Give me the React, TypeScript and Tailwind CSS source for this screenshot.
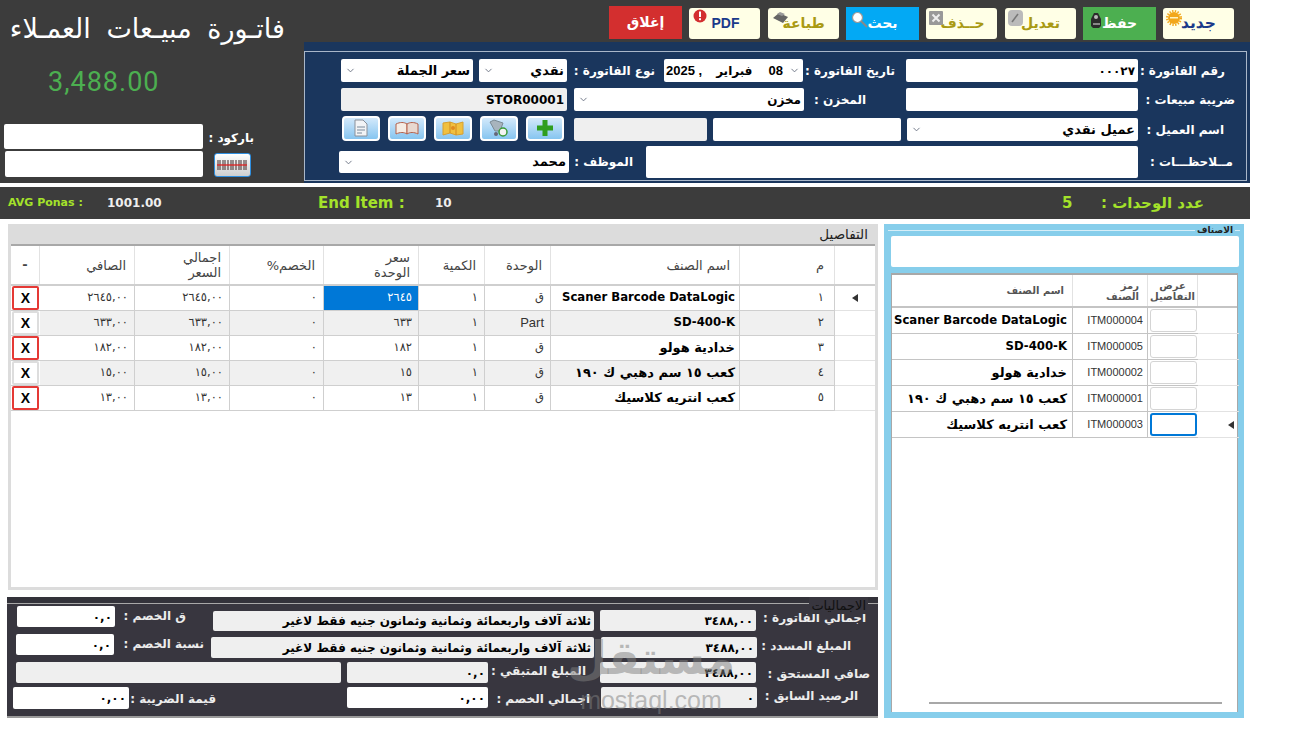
import React from 'react';
import { ChevronDown } from 'lucide-react';

const details = [
  { no: '١', name: 'Scaner Barcode DataLogic', latin: true, unit: 'ق', qty: '١', price: '٢٦٤٥', total: '٢٦٤٥,٠٠' },
  { no: '٢', name: 'SD-400-K', latin: true, unit: 'Part', qty: '١', price: '٦٣٣', total: '٦٣٣,٠٠' },
  { no: '٣', name: 'خدادية هولو', latin: false, unit: 'ق', qty: '١', price: '١٨٢', total: '١٨٢,٠٠' },
  { no: '٤', name: 'كعب ١٥ سم دهبي ك ١٩٠', latin: false, unit: 'ق', qty: '١', price: '١٥', total: '١٥,٠٠' },
  { no: '٥', name: 'كعب انتريه كلاسيك', latin: false, unit: 'ق', qty: '١', price: '١٣', total: '١٣,٠٠' },
];

const items = [
  { code: 'ITM000004', name: 'Scaner Barcode DataLogic', latin: true },
  { code: 'ITM000005', name: 'SD-400-K', latin: true },
  { code: 'ITM000002', name: 'خدادية هولو', latin: false },
  { code: 'ITM000001', name: 'كعب ١٥ سم دهبي ك ١٩٠', latin: false },
  { code: 'ITM000003', name: 'كعب انتريه كلاسيك', latin: false },
];

const Marker = () => (
  <svg width="6" height="8" viewBox="0 0 6 8"><polygon points="6,0 6,8 0,4" fill="#333" /></svg>
);

// Input-like box used everywhere in the form
const Box: React.FC<{ className?: string; children?: React.ReactNode; select?: boolean }> = ({ className, children, select }) => (
  <div dir="rtl" className={`flex items-center shrink-0 rounded-[2px] px-[3px] text-[12px] font-bold text-black whitespace-nowrap ${className}`}>
    <span className="flex-1 text-right">{children}</span>
    {select && <ChevronDown size={11} className="text-gray-500 ml-[1px]" />}
  </div>
);

const Label: React.FC<{ className?: string; children: React.ReactNode }> = ({ className, children }) => (
  <div dir="rtl" className={`shrink-0 text-right text-[12px] font-bold whitespace-nowrap ${className}`}>{children}</div>
);

const IconBtn: React.FC<{ children: React.ReactNode }> = ({ children }) => (
  <div className="w-[38px] h-[25px] rounded-[4px] border-2 border-white bg-linear-to-b from-[#d3e9fb] to-[#86c5f0] flex items-center justify-center">
    {children}
  </div>
);

const Header = () => (
  <div className="flex h-[183px] bg-[#3c3c3c]">
    <div className="w-[304px] shrink-0">
      <div dir="rtl" className="pt-[12px] pr-[19px] text-right text-[27px] leading-[34px] [word-spacing:7px] text-white whitespace-nowrap">فاتـورة مبيـعات العمـلاء</div>
      <div className="mt-[20px] ml-[48px] font-['Roboto',sans-serif] text-[27px] leading-[32px] tracking-[1px] text-[#4caf50]">3,488.00</div>
      <div className="flex mt-[26px] ml-[4px]">
        <div className="flex flex-col gap-[2px]">
          <Box className="w-[199px] h-[25px] bg-white" />
          <Box className="w-[198px] h-[26px] ml-px bg-white" />
        </div>
        <div className="ml-[7px] w-[44px] flex flex-col items-center">
          <Label className="text-[11px] text-white mt-[5px] leading-[18px] w-[44px]">باركود :</Label>
          <div className="w-[37px] h-[24px] mt-[6px] rounded-[3px] border border-[#2f8fe0] bg-linear-to-b from-white to-[#cfcfcf] flex items-center justify-center">
            <svg width="30" height="10" viewBox="0 0 30 10">
              <path d="M1 0v10M3 0v10M6 0v10M8 0v10M11 0v10M14 0v10M16 0v10M19 0v10M22 0v10M24 0v10M27 0v10M29 0v10" stroke="#5a4a4a" strokeWidth="1.2" />
              <path d="M0 5h30" stroke="#e02020" strokeWidth="1.3" />
            </svg>
          </div>
        </div>
      </div>
    </div>

    <div className="flex-1 flex flex-col">
      <div className="h-[42px] flex items-start text-[14px] font-bold">
        <div dir="rtl" className="ml-[305px] mt-[6px] w-[73px] h-[33px] bg-[#d32f2f] text-white flex items-center justify-center">إغلاق</div>
        <div className="relative ml-[7px] mt-[8px] w-[71px] h-[31px] rounded-[3px] bg-[#ffffe6] text-[#1a3a8a] flex items-center justify-center pl-[2px] font-['Liberation_Sans',sans-serif]">
          PDF
          <svg className="absolute left-[4px] top-[1px]" width="14" height="14" viewBox="0 0 14 14">
            <circle cx="7" cy="7" r="6.500" fill="#d32f2f" />
            <rect x="6" y="2.500" width="2" height="5.500" fill="#fff" />
            <rect x="6" y="9.200" width="2" height="2" fill="#fff" />
          </svg>
        </div>
        <div dir="rtl" className="relative ml-[8px] mt-[8px] w-[71px] h-[31px] rounded-[3px] bg-[#ffffe6] text-[#a99a12] flex items-center justify-center">
          طباعة
          <svg className="absolute left-[4px] top-[3px]" width="17" height="14" viewBox="0 0 17 14">
            <path d="M1 7 7 2l9 4-5 6z" fill="#666" />
            <path d="M5 3 8 1l5 2-3 2z" fill="#999" />
          </svg>
        </div>
        <div dir="rtl" className="relative ml-[7px] mt-[7px] w-[73px] h-[33px] bg-[#03a9f4] text-white flex items-center justify-center">
          بحث
          <svg className="absolute left-[5px] top-[4px]" width="17" height="17" viewBox="0 0 17 17">
            <path d="m10 10 6 6" stroke="#888" strokeWidth="2" />
            <circle cx="6.500" cy="6.500" r="5" fill="#fff" stroke="#999" strokeWidth="1.200" />
          </svg>
        </div>
        <div dir="rtl" className="relative ml-[7px] mt-[8px] w-[71px] h-[31px] rounded-[3px] bg-[#ffffe6] text-[#a99a12] flex items-center justify-center pl-[2px]">
          حــذف
          <svg className="absolute left-[3px] top-[3px]" width="14" height="14" viewBox="0 0 14 14">
            <rect width="14" height="14" rx="1" fill="#999" />
            <path d="m3.500 3.500 7 7m0-7-7 7" stroke="#eee" strokeWidth="2" />
          </svg>
        </div>
        <div dir="rtl" className="relative ml-[8px] mt-[8px] w-[71px] h-[31px] rounded-[3px] bg-[#ffffe6] text-[#a99a12] flex items-center justify-center">
          تعديل
          <svg className="absolute left-[3px] top-[2px]" width="15" height="16" viewBox="0 0 15 16">
            <rect width="15" height="16" rx="4" fill="#bbb" />
            <path d="m4 12 6-8" stroke="#777" strokeWidth="1.600" />
          </svg>
        </div>
        <div dir="rtl" className="relative ml-[7px] mt-[7px] w-[73px] h-[33px] bg-[#4caf50] text-white flex items-center justify-center">
          حفظ
          <svg className="absolute left-[7px] top-[5px]" width="13" height="17" viewBox="0 0 13 17">
            <path d="M4 1h4l3 6v7l-2 2H3l-2-2V7z" fill="#2b2b2b" />
            <circle cx="6" cy="5" r="2" fill="#bbb" />
            <rect x="3" y="11" width="7" height="2" fill="#888" />
          </svg>
        </div>
        <div dir="rtl" className="relative ml-[7px] mt-[8px] w-[71px] h-[31px] rounded-[3px] bg-[#ffffe6] text-[#1a3a8a] text-[15.500px] flex items-center justify-center">
          جديد
          <svg className="absolute left-[3px] top-[2px]" width="16" height="16" viewBox="0 0 16 16">
            <circle cx="8" cy="8" r="6" fill="#f2a71b" />
            <circle cx="8" cy="8" r="7" fill="none" stroke="#f2a71b" strokeWidth="2" strokeDasharray="1.400 1.400" />
            <rect x="4" y="7" width="8" height="1.500" fill="#fff3c0" />
          </svg>
        </div>
      </div>

      <div className="h-[141px] bg-[#1a365d] pt-[9px] pr-[3px]">
        <div className="h-[130px] border border-[#a9b7c9] text-white">
          <div className="flex items-center h-[23px] mt-[7px] pl-[36px]">
            <Box select className="w-[132px] h-[23px] bg-white text-[13px]">سعر الجملة</Box>
            <Box select className="ml-[6px] w-[88px] h-[23px] bg-white text-[13px]">نقدي</Box>
            <Label className="w-[88px]">نوع الفاتورة :</Label>
            <div className="ml-[9px] w-[139px] h-[23px] rounded-[2px] bg-white flex items-center pl-[2px] pr-[3px] text-[12px] font-bold text-black">
              <span className="whitespace-pre font-['Liberation_Sans',sans-serif] text-[13px]">2025 ,</span>
              <span dir="rtl" className="ml-[14px]">فبراير</span>
              <span className="ml-[16px] font-['Liberation_Sans',sans-serif] text-[13px]">08</span>
              <ChevronDown size={11} className="ml-auto text-gray-500" />
            </div>
            <Label className="w-[92px]">تاريخ الفاتورة :</Label>
            <Box className="ml-[11px] w-[232px] h-[23px] bg-white">٠٠٠٢٧</Box>
            <Label className="w-[87px]">رقم الفاتورة :</Label>
          </div>
          <div className="flex items-center h-[23px] mt-[6px] pl-[36px]">
            <Box className="w-[226px] h-[23px] bg-[#efefef]">STOR00001</Box>
            <Box select className="ml-[7px] w-[230px] h-[23px] bg-white">مخزن</Box>
            <Label className="w-[62px]">المخزن :</Label>
            <Box className="ml-[40px] w-[232px] h-[23px] bg-white" />
            <Label className="w-[97px]">ضريبة مبيعات :</Label>
          </div>
          <div className="flex items-center h-[23px] mt-[7px] pl-[37px]">
            <div className="flex gap-[8px] -mt-[3px]">
              <IconBtn>
                <svg width="14" height="18" viewBox="0 0 14 18">
                  <path d="M1 1h8l4 4v12H1z" fill="#f2f4f6" stroke="#8a9099" />
                  <path d="M3 8h8M3 11h8M3 14h5" stroke="#7a8a9a" strokeWidth="1.200" />
                </svg>
              </IconBtn>
              <IconBtn>
                <svg width="24" height="14" viewBox="0 0 24 14">
                  <path d="M1 3c4-2 8-2 11 0v10C9 11 5 11 1 13z" fill="#f5ece4" stroke="#b5604a" />
                  <path d="M23 3c-4-2-8-2-11 0v10c3-2 7-2 11 0z" fill="#e8d8d0" stroke="#b5604a" />
                </svg>
              </IconBtn>
              <IconBtn>
                <svg width="22" height="15" viewBox="0 0 22 15">
                  <path d="M1 2 8 1l6 2 7-2v12l-7 1-6-2-7 2z" fill="#f0c040" stroke="#d8a030" />
                  <path d="M8 1v11M14 3v11" stroke="#d08a20" />
                  <circle cx="11" cy="7" r="2" fill="#e08a20" />
                </svg>
              </IconBtn>
              <IconBtn>
                <svg width="20" height="18" viewBox="0 0 20 18">
                  <path d="M1 3 5 1l9 3-3 8H6z" fill="#a8b4bd" stroke="#7a8a94" />
                  <circle cx="7" cy="15" r="2" fill="#667" />
                  <circle cx="14" cy="13" r="4" fill="#f4f4f4" stroke="#3a9a3a" strokeWidth="1.500" />
                </svg>
              </IconBtn>
              <IconBtn>
                <svg width="18" height="18" viewBox="0 0 18 18">
                  <path d="M6.500 1h5v5.500H17v5h-5.500V17h-5v-5.500H1v-5h5.500z" fill="#2f9e1f" />
                </svg>
              </IconBtn>
            </div>
            <Box className="ml-[10px] w-[133px] h-[23px] bg-[#efefef]" />
            <Box className="ml-[6px] w-[188px] h-[23px] bg-white" />
            <Box select className="ml-[6px] w-[231px] h-[23px] bg-white text-[13px]">عميل نقدي</Box>
            <Label className="w-[86px]">اسم العميل :</Label>
          </div>
          <div className="flex items-center h-[32px] mt-[5px] pl-[34px]">
            <Box select className="w-[230px] h-[22px] bg-white text-[13px]">محمد</Box>
            <Label className="w-[64px]">الموظف :</Label>
            <Box className="ml-[13px] w-[492px] h-[32px] bg-white" />
            <Label className="w-[95px]">مــلاحظـــات :</Label>
          </div>
        </div>
      </div>
    </div>
  </div>
);

const Strip = () => (
  <div className="flex items-center h-[32px] mt-[4px] bg-[#3c3c3c] font-bold">
    <span className="ml-[8px] w-[99px] text-[11px] text-[#a4e22a]">AVG Ponas :</span>
    <span className="w-[211px] text-[12px] text-[#eeeeee]">1001.00</span>
    <span className="w-[117px] text-[15px] text-[#a4e22a]">End Item :</span>
    <span className="w-[627px] text-[12px] text-[#eeeeee]">10</span>
    <span className="w-[39px] text-[15px] text-[#a4e22a]">5</span>
    <span dir="rtl" className="text-[15px] text-[#a4e22a]">عدد الوحدات :</span>
  </div>
);

const detailCols = 'grid grid-cols-[29px_95px_95px_94px_95px_66px_66px_189px_95px_40px]';
const headCell = 'flex items-center justify-start pr-[8px] border-r border-[#e2e2e2] text-right leading-[15px]';
const rowCell = 'flex items-center pr-[6px] border-r border-b border-[#cfcfcf]';

const DetailsGrid = () => (
  <div className="h-[366px] bg-[#dcdcdc] px-[3px] pb-[3px] flex flex-col">
    <div dir="rtl" className="h-[20px] pr-[7px] text-[13.500px] leading-[20px] text-[#222]">التفاصيل</div>
    <div className="flex-1 bg-white border-t-2 border-[#a8a8a8]">
      <div className={`${detailCols} h-[40px] border-b-2 border-[#cfcfcf] text-[13px] text-[#444]`} dir="ltr">
        <div className="flex items-center justify-center border-r border-[#e2e2e2] font-bold">-</div>
        <div dir="rtl" className={headCell}>الصافي</div>
        <div dir="rtl" className={headCell}>اجمالي<br />السعر</div>
        <div dir="rtl" className={headCell}>الخصم%</div>
        <div dir="rtl" className={headCell}>سعر<br />الوحدة</div>
        <div dir="rtl" className={headCell}>الكمية</div>
        <div dir="rtl" className={headCell}>الوحدة</div>
        <div dir="rtl" className={`${headCell} pr-[9px]`}>اسم الصنف</div>
        <div dir="rtl" className={`${headCell} pr-[10px]`}>م</div>
        <div />
      </div>
      {details.map((r, i) => {
        const shade = i % 2 === 1 ? 'bg-[#f0f0f0]' : 'bg-white';
        return (
          <div key={r.no} dir="ltr" className={`${detailCols} h-[25px] text-[11.500px] text-[#333]`}>
            <div className="flex items-center justify-center border-b border-[#cfcfcf]">
              <div className={`w-[27px] h-[24px] rounded-[2px] flex items-center justify-center text-[14px] font-bold text-black font-['Liberation_Sans',sans-serif] bg-white border-2 ${i % 2 === 0 ? 'border-[#e53935]' : 'border-[#dddddd]'}`}>X</div>
            </div>
            <div dir="rtl" className={`${rowCell} ${shade}`}>{r.total}</div>
            <div dir="rtl" className={`${rowCell} ${shade}`}>{r.total}</div>
            <div dir="rtl" className={`${rowCell} ${shade}`}>٠</div>
            <div dir="rtl" className={`${rowCell} ${i === 0 ? 'bg-[#0078d7] text-white' : shade}`}>{r.price}</div>
            <div dir="rtl" className={`${rowCell} ${shade}`}>{r.qty}</div>
            <div dir="rtl" className={`${rowCell} ${shade} ${r.unit === 'Part' ? "font-['Liberation_Sans',sans-serif] text-[13px]" : ''}`}>{r.unit}</div>
            <div dir="rtl" className={`flex items-center pr-[4px] border-r border-b border-[#cfcfcf] ${shade} ${r.latin ? 'text-[11.700px]' : 'text-[13px]'} font-bold text-black whitespace-nowrap`}>{r.name}</div>
            <div dir="rtl" className={`${rowCell} ${shade} pr-[10px]`}>{r.no}</div>
            <div className="flex items-center justify-center border-b border-[#e2e2e2]">{i === 0 && <Marker />}</div>
          </div>
        );
      })}
    </div>
  </div>
);

const Totals = () => (
  <div className="relative h-[121px] mt-[7px] -ml-px w-[871px] bg-[#38363f] border-b-2 border-[#9a9a9a] text-[#ececec] overflow-hidden">
    <div className="h-[7px] bg-[#33323a] border-b border-[#a8a8a8]" />
    <div dir="rtl" className="absolute right-[10px] top-0 px-[2px] bg-[#38363f] text-[13px] leading-[17px] text-[#111]">الاجماليات</div>

    <div className="flex h-[25px] mt-[2px]">
      <Box className="ml-[10px] w-[98px] h-[21px] bg-white">٠,٠</Box>
      <Label className="w-[71px] leading-[21px]">ق الخصم :</Label>
      <Box className="ml-[27px] mt-[5px] w-[381px] h-[20px] bg-[#efefef] text-[10.300px]">ثلاثة آلاف واربعمائة وثمانية وثمانون جنيه فقط لاغير</Box>
      <Box className="ml-[6px] mt-[4px] w-[156px] h-[21px] bg-[#efefef]">٣٤٨٨,٠٠</Box>
      <Label className="w-[110px] leading-[25px]">اجمالي الفاتورة :</Label>
    </div>
    <div className="flex h-[24px] mt-[3px]">
      <Box className="ml-[9px] w-[98px] h-[21px] bg-white">٠,٠</Box>
      <Label className="w-[90px] leading-[21px]">نسبة الخصم :</Label>
      <Box className="ml-[7px] mt-[3px] w-[383px] h-[21px] bg-[#efefef] text-[10.300px]">ثلاثة آلاف واربعمائة وثمانية وثمانون جنيه فقط لاغير</Box>
      <Box className="ml-[7px] mt-[3px] w-[156px] h-[21px] bg-[#efefef]">٣٤٨٨,٠٠</Box>
      <Label className="w-[94px] leading-[25px]">المبلغ المسدد :</Label>
    </div>
    <div className="flex h-[21px] mt-[4px]">
      <Box className="ml-[9px] w-[325px] h-[21px] bg-[#efefef]" />
      <Box className="ml-[6px] w-[141px] h-[21px] bg-[#efefef]">٠,٠</Box>
      <Label className="w-[98px] leading-[18px]">المبلغ المتبقي :</Label>
      <Box className="ml-[14px] w-[156px] h-[21px] bg-[#efefef]">٣٤٨٨,٠٠</Box>
      <Label className="w-[114px] leading-[25px]">صافي المستحق :</Label>
    </div>
    <div className="flex h-[22px] mt-[4px]">
      <Box className="ml-[6px] w-[116px] h-[22px] bg-white">٠,٠٠</Box>
      <Label className="w-[87px] leading-[24px]">قيمة الضريبة :</Label>
      <Box className="ml-[131px] w-[141px] h-[21px] bg-white">٠,٠٠</Box>
      <Label className="w-[102px] leading-[24px]">اجمالي الخصم :</Label>
      <Box className="ml-[11px] w-[156px] h-[21px] bg-[#efefef]">٠</Box>
      <Label className="w-[101px] leading-[18px]">الرصيد السابق :</Label>
    </div>
  </div>
);

const itemCols = 'grid grid-cols-[181px_75px_50px_41px]';

const ItemsPanel = () => (
  <div className="relative ml-[6px] w-[360px] h-[494px] bg-[#87ceeb] flex flex-col">
    <div className="h-px mt-[6px] mx-[4px] bg-[#d6eef8]" />
    <div dir="rtl" className="absolute right-[9px] top-0 px-[2px] bg-[#87ceeb] text-[9px] leading-[12px] font-bold text-[#222]">الاصناف</div>
    <Box className="ml-[7px] mt-[5px] w-[348px] h-[31px] bg-white" />
    <div className="ml-[7px] mt-[6px] w-[347px] h-[439px] bg-white border-t-2 border-x border-[#a8a8a8] flex flex-col">
      <div className={`${itemCols} h-[33px] border-b-2 border-[#c4c4c4] text-[10px] leading-[11px] font-bold text-[#555]`}>
        <div dir="rtl" className="flex items-center pr-[8px] border-r border-[#e2e2e2]">اسم الصنف</div>
        <div dir="rtl" className="flex items-center pr-[8px] border-r border-[#e2e2e2]">رمز<br />الصنف</div>
        <div dir="rtl" className="flex items-center justify-center text-center border-r border-[#e2e2e2]">عرض<br />التفاصيل</div>
        <div />
      </div>
      {items.map((r, i) => (
        <div key={r.code} className={`${itemCols} h-[26px]`}>
          <div dir="rtl" className={`flex items-center pr-[5px] border-r border-b border-[#c4c4c4] ${r.latin ? 'text-[11.700px]' : 'text-[13px]'} font-bold text-black whitespace-nowrap`}>{r.name}</div>
          <div className="flex items-center justify-end pr-[4px] border-r border-b border-[#c4c4c4] font-['Liberation_Sans',sans-serif] text-[11px] text-[#333]">{r.code}</div>
          <div className="flex items-center justify-center border-b border-[#c4c4c4]">
            <div className={`w-[47px] h-[23px] rounded-[3px] bg-white ${i === 4 ? 'border-2 border-[#0078d7]' : 'border border-[#d4d4d4]'}`} />
          </div>
          <div className="flex items-center justify-end pr-[5px] border-b border-[#e2e2e2]">{i === 4 && <Marker />}</div>
        </div>
      ))}
      <div className="flex-1" />
      <div className="ml-[37px] mb-[8px] w-[293px] h-[2px] bg-[#a8a8a8]" />
    </div>
  </div>
);

export default function App() {
  return (
    <div className="relative w-[1302px] h-[730px] overflow-hidden bg-white font-['DejaVu_Sans',sans-serif]">
      <div className="w-[1250px]">
        <Header />
        <Strip />
        <div className="flex mt-[5px] pl-[8px]">
          <div className="w-[870px] shrink-0">
            <DetailsGrid />
            <Totals />
          </div>
          <ItemsPanel />
        </div>
      </div>
      {/* site watermark on top of the totals */}
      <div className="absolute left-[566px] top-[630px] w-[170px] text-center pointer-events-none text-[#808080]/50">
        <div dir="rtl" className="text-[46px] leading-[56px] font-bold">مستقل</div>
        <div className="font-['Liberation_Sans',sans-serif] text-[25px] leading-[28px]">mostaql.com</div>
      </div>
    </div>
  );
}
